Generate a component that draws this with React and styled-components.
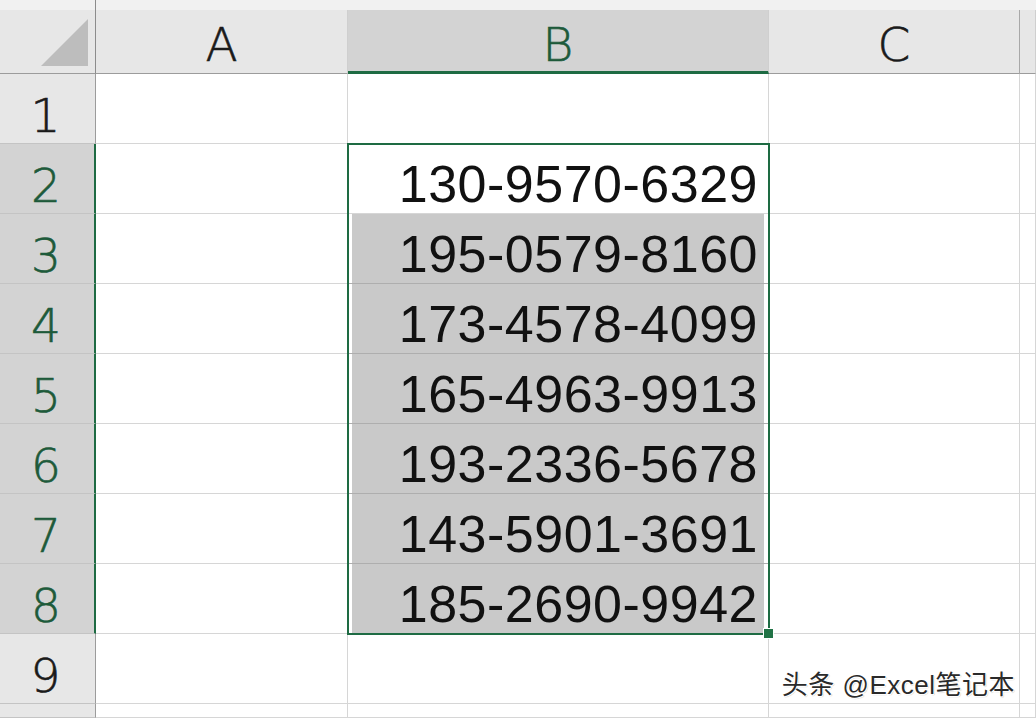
import React from "react";
import styled, { createGlobalStyle } from "styled-components";

const Global = createGlobalStyle`
  html, body { margin: 0; padding: 0; background: #fff; overflow: hidden; }
  #root { width: 1036px; height: 718px; }
`;

const GREEN = "#1e6b43";

const Sheet = styled.div`
  position: relative;
  width: 1036px;
  height: 718px;
  display: grid;
  grid-template-columns: 96px 252px 421px 251px 1fr;
  grid-template-rows: 74px repeat(9, 70px) 1fr;
  background: #fff;
  overflow: hidden;
`;

const Corner = styled.div`
  grid-row: 1;
  grid-column: 1;
  background: linear-gradient(#f1f1f1 0 10px, #e7e7e7 10px);
  border-bottom: 1px solid #9c9c9c;
  border-right: 1px solid #8c8c8c;
  box-sizing: border-box;
  display: flex;
  justify-content: flex-end;
  align-items: flex-end;
  padding: 0 6px 6px 0;
`;

const ColHead = styled.div`
  grid-row: 1;
  grid-column: ${(p) => p.$c};
  box-sizing: border-box;
  padding-top: 10px;
  background: #f1f1f1;
  display: flex;
`;

const ColFace = styled.div`
  flex: 1;
  box-sizing: border-box;
  display: flex;
  align-items: flex-end;
  justify-content: center;
  padding-bottom: ${(p) => (p.$sel ? "3px" : "5px")};
  background: ${(p) => (p.$sel ? "#d3d3d3" : "#e7e7e7")};
  border-right: 1px solid ${(p) => (p.$last ? "#a8a8a8" : "#cfcfcf")};
  border-bottom: ${(p) => (p.$sel ? `3px solid ${GREEN}` : "1px solid #9c9c9c")};
  color: ${(p) => (p.$sel ? "#1d5a3a" : "#1a1a1a")};
  font-family: "DejaVu Sans", "Liberation Sans", sans-serif;
  font-weight: 300;
  -webkit-text-stroke: 0.6px currentColor;
  font-size: 47px;
  line-height: 1;
`;

const RowHead = styled.div`
  grid-row: ${(p) => p.$r};
  grid-column: 1;
  box-sizing: border-box;
  display: flex;
  align-items: flex-end;
  justify-content: center;
  padding: 0 ${(p) => (p.$sel ? "2px" : "4px")} 4px 0;
  background: ${(p) => (p.$sel ? "#d3d3d3" : "#e7e7e7")};
  border-bottom: 1px solid #c4c4c4;
  border-right: ${(p) => (p.$sel ? `2px solid ${GREEN}` : "1px solid #9c9c9c")};
  color: ${(p) => (p.$sel ? "#1d5a3a" : "#1a1a1a")};
  font-family: "DejaVu Sans", "Liberation Sans", sans-serif;
  font-weight: 300;
  -webkit-text-stroke: 0.6px currentColor;
  font-size: 47px;
  line-height: 1;
`;

const Cell = styled.div`
  grid-row: ${(p) => p.$r};
  grid-column: ${(p) => p.$c};
  box-sizing: border-box;
  border-right: 1px solid #d6d6d6;
  border-bottom: 1px solid ${(p) => (p.$shade ? "#aeaeae" : "#d6d6d6")};
  background: ${(p) =>
    p.$shade
      ? "linear-gradient(to right, #fff 0 4px, #c9c9c9 4px calc(100% - 4px), #fff calc(100% - 4px))"
      : "#fff"};
  display: flex;
  align-items: flex-end;
  justify-content: flex-end;
  padding: 0 10px 3px 0;
  white-space: nowrap;
  font-family: "Liberation Sans", Arial, sans-serif;
  font-size: 52px;
  letter-spacing: 0.5px;
  line-height: 1;
  color: #111;
`;

const Selection = styled.div`
  grid-column: 3 / 4;
  grid-row: 3 / 10;
  margin: -1px;
  border: 2px solid ${GREEN};
  position: relative;
  z-index: 2;
  pointer-events: none;
`;

const Handle = styled.div`
  position: absolute;
  right: -6px;
  bottom: -6px;
  width: 9px;
  height: 9px;
  background: #217346;
  border: 1px solid #fff;
`;

const Watermark = styled.div`
  position: absolute;
  right: 21px;
  top: 664px;
  z-index: 3;
  font-family: "Liberation Sans", "Noto Sans CJK SC", sans-serif;
  font-size: 26px;
  letter-spacing: 0.5px;
  color: #2a2a2a;
  text-shadow: 1px 1px 0 #fff, -1px -1px 0 #fff, 1px -1px 0 #fff, -1px 1px 0 #fff,
    1px 1px 1px rgba(0, 0, 0, 0.4);
  white-space: nowrap;
`;

const phones = [
  null,
  "130-9570-6329",
  "195-0579-8160",
  "173-4578-4099",
  "165-4963-9913",
  "193-2336-5678",
  "143-5901-3691",
  "185-2690-9942",
  null,
  null,
];

const cols = ["A", "B", "C", ""];

export default function App() {
  return (
    <>
      <Global />
      <Sheet>
        <Corner>
          <svg width="48" height="48" viewBox="0 0 48 48">
            <polygon points="47,0 47,47 0,47" fill="#bdbdbd" />
          </svg>
        </Corner>
        {cols.map((c, i) => (
          <ColHead key={c + i} $c={i + 2}>
            <ColFace $sel={c === "B"} $last={i === 2}>
              {c}
            </ColFace>
          </ColHead>
        ))}
        {phones.map((val, idx) => {
          const r = idx + 1;
          const gr = idx + 2;
          const sel = r >= 2 && r <= 8;
          return (
            <React.Fragment key={r}>
              <RowHead $r={gr} $sel={sel}>{r <= 9 ? r : ""}</RowHead>
              <Cell $r={gr} $c={2} />
              <Cell $r={gr} $c={3} $shade={r >= 3 && r <= 8}>{val}</Cell>
              <Cell $r={gr} $c={4} />
              <Cell $r={gr} $c={5} />
            </React.Fragment>
          );
        })}
        <Selection>
          <Handle />
        </Selection>
        <Watermark>头条 @Excel笔记本</Watermark>
      </Sheet>
    </>
  );
}
